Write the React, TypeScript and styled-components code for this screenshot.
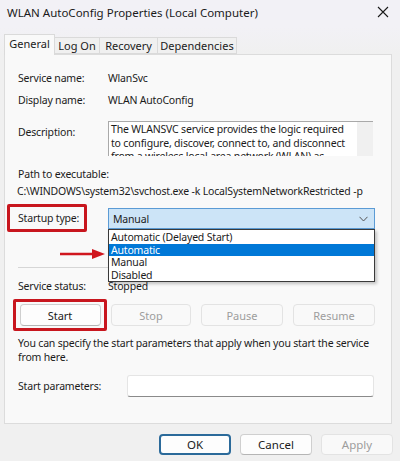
import React from "react";
import styled, { createGlobalStyle } from "styled-components";

const Global = createGlobalStyle`
  html, body { margin: 0; padding: 0; background: #f0f0f0; }
  * { box-sizing: border-box; }
  body { font-family: "Noto Sans", "Open Sans", sans-serif; color: #1b1b1b; }
`;

const Window = styled.div`
  width: 400px;
  height: 461px;
  background: #f0f0f0;
  display: flex;
  flex-direction: column;
  overflow: hidden;
  font-size: 10.5px;
  letter-spacing: -0.18px;
`;

const TitleBar = styled.div`
  height: 26px;
  display: flex;
  align-items: center;
  justify-content: space-between;
  padding: 0 11px 2px 7px;
  background: #f2f1f6;
  font-size: 11.5px;
  letter-spacing: 0;
  color: #1a1a1a;
`;

const CloseIcon = styled.svg`
  width: 12px;
  height: 12px;
`;

const TabStrip = styled.div`
  height: 28px;
  display: flex;
  align-items: flex-end;
  padding-left: 4px;
  background: linear-gradient(#f2f1f6, #f0f0f0);
`;

const Tab = styled.div<{ $active?: boolean; $w: number }>`
  height: ${(p) => (p.$active ? 21 : 17)}px;
  width: ${(p) => p.$w}px;
  display: flex;
  align-items: center;
  justify-content: center;
  border: 1px solid #dadada;
  border-bottom: ${(p) => (p.$active ? "none" : "1px solid #dadada")};
  margin-left: ${(p) => (p.$active ? 0 : -1)}px;
  background: ${(p) => (p.$active ? "#f9f9f9" : "#f0f0f0")};
  font-size: 11px;
  letter-spacing: 0;
  padding-bottom: ${(p) => (p.$active ? 3 : 0)}px;
  position: relative;
  z-index: ${(p) => (p.$active ? 1 : 0)};
  margin-bottom: ${(p) => (p.$active ? -1 : 0)}px;
`;

const Panel = styled.div`
  margin: 0 8px 0 4px;
  height: 370px;
  border: 1px solid #dcdcdc;
  background: #f9f9f9;
  padding: 13px 0 0 0;
  display: flex;
  flex-direction: column;
`;

const Row = styled.div<{ $h: number; $mt?: number }>`
  height: ${(p) => p.$h}px;
  margin-top: ${(p) => p.$mt ?? 0}px;
  display: flex;
  align-items: center;
  padding-left: 13px;
  white-space: nowrap;
`;

const Label = styled.div<{ $w?: number }>`
  width: ${(p) => p.$w ?? 90}px;
  flex-shrink: 0;
`;

const Value = styled.div``;

const DescRow = styled.div`
  margin-top: 11px;
  height: 35px;
  display: flex;
  padding-left: 13px;
`;

const DescLabel = styled.div`
  width: 90px;
  padding-top: 4px;
`;

const DescBox = styled.div`
  width: 265px;
  height: 35px;
  display: flex;
  border-top: 1px solid #a9a9a9;
  border-left: 1px solid #a9a9a9;
  background: #fff;
  overflow: hidden;
`;

const DescText = styled.div`
  flex: 1;
  padding: 1px 0 0 2px;
  line-height: 13.5px;
  white-space: nowrap;
  overflow: hidden;
`;

const ScrollTrack = styled.div`
  width: 16px;
  flex-shrink: 0;
  background: #f0f0f0;
`;

const TextLine = styled.div<{ $mt?: number; $pl?: number }>`
  margin-top: ${(p) => p.$mt ?? 0}px;
  height: 14px;
  line-height: 14px;
  padding-left: ${(p) => p.$pl ?? 13}px;
  white-space: nowrap;
`;

const StartupRow = styled.div`
  margin-top: 6px;
  height: 28px;
  display: flex;
  align-items: center;
  padding-left: 2px;
`;

const RedBox = styled.div<{ $w: number; $h: number }>`
  width: ${(p) => p.$w}px;
  height: ${(p) => p.$h}px;
  border: 3px solid #c8161e;
  border-radius: 2px;
  display: flex;
  align-items: center;
  justify-content: center;
  flex-shrink: 0;
`;

const RedLabel = styled.div`
  width: 100%;
  padding-left: 8px;
  white-space: nowrap;
`;

const SelectWrap = styled.div`
  position: relative;
  margin-left: 21px;
  margin-top: 1px;
  width: 267px;
  height: 21px;
`;

const SelectBox = styled.div`
  height: 21px;
  background: #cce4f7;
  border: 1px solid #5b9bd5;
  display: flex;
  align-items: center;
  justify-content: space-between;
  padding: 0 6px 0 4px;
`;

const Chevron = styled.svg`
  width: 9px;
  height: 6px;
`;

const DropList = styled.div`
  position: absolute;
  top: 21px;
  left: 0;
  width: 267px;
  height: 53px;
  background: #fff;
  border: 1px solid #3a3a3a;
  box-shadow: 2px 2px 3px rgba(0, 0, 0, 0.22);
  z-index: 5;
  padding-top: 1px;
`;

const DropItem = styled.div<{ $sel?: boolean }>`
  height: 12.5px;
  line-height: 12.5px;
  padding-left: 2px;
  white-space: nowrap;
  background: ${(p) => (p.$sel ? "#0078d7" : "transparent")};
  color: ${(p) => (p.$sel ? "#fff" : "#1b1b1b")};
`;

const Arrow = styled.svg`
  position: absolute;
  left: -50px;
  top: 40px;
  width: 48px;
  height: 12px;
`;

const Separator = styled.div`
  margin: 35px 17px 0 13px;
  height: 1px;
  background: #d6d6d6;
`;

const ButtonRow = styled.div`
  margin-top: 5px;
  display: flex;
  align-items: center;
  padding-left: 8px;
`;

const Btn = styled.div<{ $disabled?: boolean; $w?: number }>`
  width: ${(p) => p.$w ?? 81}px;
  height: 22px;
  border: 1px solid ${(p) => (p.$disabled ? "#e3e3e3" : "#cfcfcf")};
  border-bottom-color: ${(p) => (p.$disabled ? "#e3e3e3" : "#b5b5b5")};
  border-radius: 4px;
  background: ${(p) => (p.$disabled ? "#f9f9f9" : "#fdfdfd")};
  color: ${(p) => (p.$disabled ? "#9d9d9d" : "#1b1b1b")};
  display: flex;
  align-items: center;
  justify-content: center;
  font-size: 11px;
  letter-spacing: 0;
  flex-shrink: 0;
`;

const BtnGroup = styled.div`
  display: flex;
  gap: 10px;
  margin-left: 4px;
`;

const ParamRow = styled.div`
  margin-top: 11px;
  height: 22px;
  display: flex;
  align-items: center;
  padding-left: 13px;
`;

const Input = styled.div`
  width: 247px;
  height: 22px;
  background: #fff;
  border: 1px solid #e5e5e5;
  border-bottom: 1px solid #8a8a8a;
  border-radius: 3px;
`;

const Footer = styled.div`
  flex: 1;
  display: flex;
  justify-content: flex-end;
  align-items: center;
  gap: 9px;
  padding: 4px 7px 0 0;
`;

const DialogBtn = styled(Btn)<{ $focus?: boolean }>`
  width: 72px;
  height: 21px;
  font-size: 11.5px;
  ${(p) => (p.$focus ? "border: 2px solid #2b6a9a; border-radius: 4px;" : "")}
`;

export default function App() {
  return (
    <>
      <Global />
      <Window>
        <TitleBar>
          <span>WLAN AutoConfig Properties (Local Computer)</span>
          <CloseIcon viewBox="0 0 12 12">
            <path d="M1 1 L11 11 M11 1 L1 11" stroke="#1a1a1a" strokeWidth="1.1" fill="none" />
          </CloseIcon>
        </TitleBar>
        <TabStrip>
          <Tab $active $w={51}>General</Tab>
          <Tab $w={46}>Log On</Tab>
          <Tab $w={59}>Recovery</Tab>
          <Tab $w={80}>Dependencies</Tab>
        </TabStrip>
        <Panel>
          <Row $h={20}>
            <Label>Service name:</Label>
            <Value>WlanSvc</Value>
          </Row>
          <Row $h={20} $mt={2}>
            <Label>Display name:</Label>
            <Value>WLAN AutoConfig</Value>
          </Row>
          <DescRow>
            <DescLabel>Description:</DescLabel>
            <DescBox>
              <DescText>
                The WLANSVC service provides the logic required
                <br />
                to configure, discover, connect to, and disconnect
                <br />
                from a wireless local area network (WLAN) as
              </DescText>
              <ScrollTrack />
            </DescBox>
          </DescRow>
          <TextLine $mt={11}>Path to executable:</TextLine>
          <TextLine $mt={3} $pl={12}>
            C:\WINDOWS\system32\svchost.exe -k LocalSystemNetworkRestricted -p
          </TextLine>
          <StartupRow>
            <RedBox $w={80} $h={28}>
              <RedLabel>Startup type:</RedLabel>
            </RedBox>
            <SelectWrap>
              <SelectBox>
                <span>Manual</span>
                <Chevron viewBox="0 0 9 6">
                  <path d="M0.5 0.8 L4.5 5 L8.5 0.8" stroke="#555" strokeWidth="1" fill="none" />
                </Chevron>
              </SelectBox>
              <DropList>
                <DropItem>Automatic (Delayed Start)</DropItem>
                <DropItem $sel>Automatic</DropItem>
                <DropItem>Manual</DropItem>
                <DropItem>Disabled</DropItem>
              </DropList>
              <Arrow viewBox="0 0 48 12">
                <path d="M2 6 H36" stroke="#d0161e" strokeWidth="2.4" />
                <path d="M34 1 L47 6 L34 11 Z" fill="#d0161e" />
              </Arrow>
            </SelectWrap>
          </StartupRow>
          <Separator />
          <Row $h={16} $mt={10}>
            <Label>Service status:</Label>
            <Value>Stopped</Value>
          </Row>
          <ButtonRow>
            <RedBox $w={94} $h={32}>
              <Btn>Start</Btn>
            </RedBox>
            <BtnGroup>
              <Btn $disabled $w={80}>Stop</Btn>
              <Btn $disabled $w={82}>Pause</Btn>
              <Btn $disabled $w={82}>Resume</Btn>
            </BtnGroup>
          </ButtonRow>
          <TextLine $mt={5}>You can specify the start parameters that apply when you start the service</TextLine>
          <TextLine>from here.</TextLine>
          <ParamRow>
            <Label $w={109}>Start parameters:</Label>
            <Input />
          </ParamRow>
        </Panel>
        <Footer>
          <DialogBtn $focus>OK</DialogBtn>
          <DialogBtn>Cancel</DialogBtn>
          <DialogBtn $disabled>Apply</DialogBtn>
        </Footer>
      </Window>
    </>
  );
}
